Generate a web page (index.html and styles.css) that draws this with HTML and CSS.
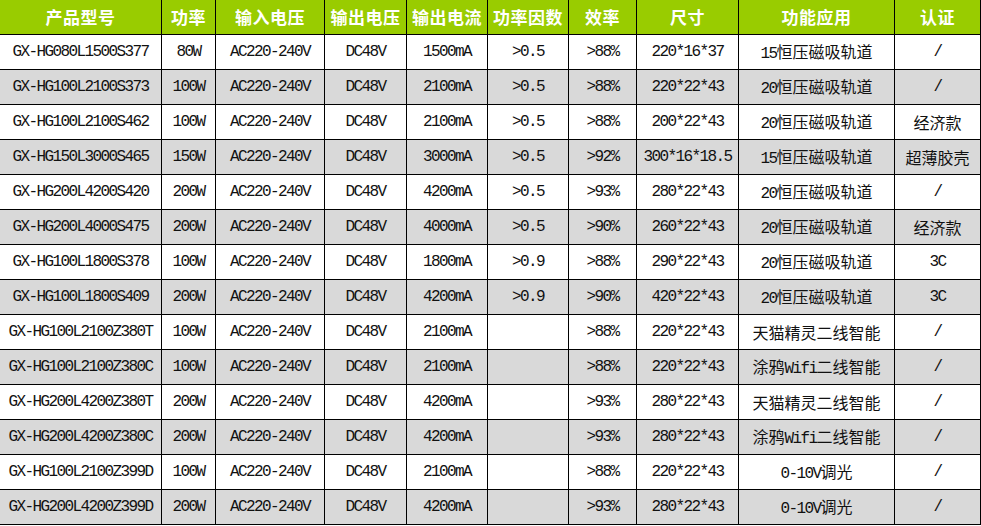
FILE: index.html
```html
<!DOCTYPE html>
<html lang="zh">
<head>
<meta charset="utf-8">
<title>产品参数表</title>
<link rel="stylesheet" href="styles.css">
</head>
<body>
<table class="spec">
  <colgroup>
    <col class="c1"><col class="c2"><col class="c3"><col class="c4"><col class="c5">
    <col class="c6"><col class="c7"><col class="c8"><col class="c9"><col class="c10">
  </colgroup>
  <thead>
    <tr>
      <th>产品型号</th><th>功率</th><th>输入电压</th><th>输出电压</th><th>输出电流</th>
      <th>功率因数</th><th>效率</th><th>尺寸</th><th>功能应用</th><th>认证</th>
    </tr>
  </thead>
  <tbody>
    <tr><td>GX-HG080L1500S377</td><td>80W</td><td>AC220-240V</td><td>DC48V</td><td>1500mA</td><td>&gt;0.5</td><td>&gt;88%</td><td>220*16*37</td><td class="cj"><span class="l">15</span>恒压磁吸轨道</td><td>/</td></tr>
    <tr><td>GX-HG100L2100S373</td><td>100W</td><td>AC220-240V</td><td>DC48V</td><td>2100mA</td><td>&gt;0.5</td><td>&gt;88%</td><td>220*22*43</td><td class="cj"><span class="l">20</span>恒压磁吸轨道</td><td>/</td></tr>
    <tr><td>GX-HG100L2100S462</td><td>100W</td><td>AC220-240V</td><td>DC48V</td><td>2100mA</td><td>&gt;0.5</td><td>&gt;88%</td><td>200*22*43</td><td class="cj"><span class="l">20</span>恒压磁吸轨道</td><td class="cj">经济款</td></tr>
    <tr><td>GX-HG150L3000S465</td><td>150W</td><td>AC220-240V</td><td>DC48V</td><td>3000mA</td><td>&gt;0.5</td><td>&gt;92%</td><td>300*16*18.5</td><td class="cj"><span class="l">15</span>恒压磁吸轨道</td><td class="cj">超薄胶壳</td></tr>
    <tr><td>GX-HG200L4200S420</td><td>200W</td><td>AC220-240V</td><td>DC48V</td><td>4200mA</td><td>&gt;0.5</td><td>&gt;93%</td><td>280*22*43</td><td class="cj"><span class="l">20</span>恒压磁吸轨道</td><td>/</td></tr>
    <tr><td>GX-HG200L4000S475</td><td>200W</td><td>AC220-240V</td><td>DC48V</td><td>4000mA</td><td>&gt;0.5</td><td>&gt;90%</td><td>260*22*43</td><td class="cj"><span class="l">20</span>恒压磁吸轨道</td><td class="cj">经济款</td></tr>
    <tr><td>GX-HG100L1800S378</td><td>100W</td><td>AC220-240V</td><td>DC48V</td><td>1800mA</td><td>&gt;0.9</td><td>&gt;88%</td><td>290*22*43</td><td class="cj"><span class="l">20</span>恒压磁吸轨道</td><td>3C</td></tr>
    <tr><td>GX-HG100L1800S409</td><td>200W</td><td>AC220-240V</td><td>DC48V</td><td>4200mA</td><td>&gt;0.9</td><td>&gt;90%</td><td>420*22*43</td><td class="cj"><span class="l">20</span>恒压磁吸轨道</td><td>3C</td></tr>
    <tr><td>GX-HG100L2100Z380T</td><td>100W</td><td>AC220-240V</td><td>DC48V</td><td>2100mA</td><td></td><td>&gt;88%</td><td>220*22*43</td><td class="cj">天猫精灵二线智能</td><td>/</td></tr>
    <tr><td>GX-HG100L2100Z380C</td><td>100W</td><td>AC220-240V</td><td>DC48V</td><td>2100mA</td><td></td><td>&gt;88%</td><td>220*22*43</td><td class="cj">涂鸦<span class="l">Wifi</span>二线智能</td><td>/</td></tr>
    <tr><td>GX-HG200L4200Z380T</td><td>200W</td><td>AC220-240V</td><td>DC48V</td><td>4200mA</td><td></td><td>&gt;93%</td><td>280*22*43</td><td class="cj">天猫精灵二线智能</td><td>/</td></tr>
    <tr><td>GX-HG200L4200Z380C</td><td>200W</td><td>AC220-240V</td><td>DC48V</td><td>4200mA</td><td></td><td>&gt;93%</td><td>280*22*43</td><td class="cj">涂鸦<span class="l">Wifi</span>二线智能</td><td>/</td></tr>
    <tr><td>GX-HG100L2100Z399D</td><td>100W</td><td>AC220-240V</td><td>DC48V</td><td>2100mA</td><td></td><td>&gt;88%</td><td>220*22*43</td><td class="cj"><span class="l">0-10V</span>调光</td><td>/</td></tr>
    <tr><td>GX-HG200L4200Z399D</td><td>200W</td><td>AC220-240V</td><td>DC48V</td><td>4200mA</td><td></td><td>&gt;93%</td><td>280*22*43</td><td class="cj"><span class="l">0-10V</span>调光</td><td>/</td></tr>
  </tbody>
</table>
</body>
</html>
```

FILE: styles.css
```css
html, body {
  margin: 0;
  padding: 0;
  background: #ffffff;
}

.spec {
  table-layout: fixed;
  width: 981px;
  border-collapse: separate;
  border-spacing: 0;
  font-family: "Liberation Mono", "Noto Sans CJK SC", monospace;
  font-size: 16px;
  color: #000000;
}

.c1 { width: 162px; }
.c2 { width: 54px; }
.c3 { width: 109px; }
.c4 { width: 82px; }
.c5 { width: 81px; }
.c6 { width: 81px; }
.c7 { width: 68px; }
.c8 { width: 102px; }
.c9 { width: 156px; }
.c10 { width: 86px; }

.spec th,
.spec td {
  box-sizing: border-box;
  height: 35px;
  padding: 0;
  border-right: 1px solid #000000;
  border-bottom: 1px solid #000000;
  text-align: center;
  vertical-align: middle;
  white-space: nowrap;
  overflow: hidden;
}

.spec th {
  background: #99cc00;
  color: #ffffff;
  font-family: "Noto Sans CJK SC", sans-serif;
  font-weight: 700;
  font-size: 17px;
  letter-spacing: 0.5px;
  line-height: 20px;
}

.spec td {
  letter-spacing: -1.6px;
  line-height: 20px;
  color: #111111;
}

.spec td.cj {
  font-family: "Noto Sans CJK SC", sans-serif;
  letter-spacing: 0;
}

.spec td .l {
  font-family: "Liberation Mono", monospace;
  letter-spacing: -1.6px;
}

.spec tbody tr:nth-child(even) td {
  background: #d9d9d9;
}
```
